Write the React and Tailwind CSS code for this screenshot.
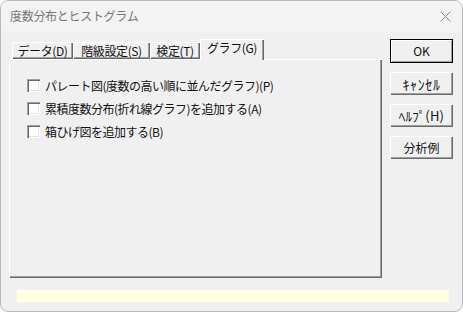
import React from 'react';

const raised =
  'shadow-[inset_1px_1px_0_#ffffff,inset_-1px_-1px_0_#696969,inset_-2px_-2px_0_#a0a0a0]';

const tabs = [
  { label: 'データ(D)', w: 'w-[61px]' },
  { label: '階級設定(S)', w: 'w-[77px]' },
  { label: '検定(T)', w: 'w-[50px]' },
];

const options = [
  'パレート図(度数の高い順に並んだグラフ)(P)',
  '累積度数分布(折れ線グラフ)を追加する(A)',
  '箱ひげ図を追加する(B)',
];

const buttons = [
  { label: 'ｷｬﾝｾﾙ', cls: 'text-[14px] tracking-[0.6px]' },
  { label: 'ﾍﾙﾌﾟ(H)', cls: 'text-[13px] tracking-[0.2px]' },
  { label: '分析例', cls: 'text-[12px] tracking-[0px]' },
];

const Checkbox = () => (
  <div className="w-[13px] h-[13px] bg-white shrink-0 shadow-[inset_1px_1px_0_#a0a0a0,inset_2px_2px_0_#696969,inset_-1px_-1px_0_#ffffff,inset_-2px_-2px_0_#e3e3e3]" />
);

const App = () => {
  return (
    <div className="w-[463px] h-[312px] bg-[#f0f0f0] border border-[#b9b9b9] rounded-lg overflow-hidden font-['Noto_Sans_CJK_JP',sans-serif] text-[12px] text-[#111]">
      {/* Title bar */}
      <div className="h-[30px] flex items-center justify-between pl-[9px] pr-[10px] bg-[#f3f3f3]">
        <span className="text-[#777] text-[12px] tracking-[-0.3px]">度数分布とヒストグラム</span>
        <svg width="11" height="11" viewBox="0 0 11 11" className="mr-[1px]">
          <path d="M0.5 0.5L10.5 10.5M10.5 0.5L0.5 10.5" stroke="#8a8a8a" strokeWidth="1" />
        </svg>
      </div>

      <div className="flex mt-[8px]">
        {/* Tabs + panel */}
        <div className="ml-[8px] w-[373px] flex flex-col">
          <div className="h-[20px] flex items-end pl-[3px] relative z-10">
            {tabs.map((t) => (
              <div
                key={t.label}
                className={`${t.w} h-[17px] flex items-center justify-center leading-none tracking-[-0.4px] ${raised}`}
              >
                {t.label}
              </div>
            ))}
            <div className="w-[64px] h-[21px] -mb-[1px] flex items-center justify-center pb-[3px] leading-none tracking-[-0.4px] bg-[#f0f0f0] shadow-[inset_1px_1px_0_#ffffff,inset_-1px_0_0_#696969,inset_-2px_0_0_#a0a0a0]">
              グラフ(G)
            </div>
          </div>
          <div className={`h-[219px] ${raised} pl-[18px] pt-[20px] flex flex-col gap-[10px]`}>
            {options.map((o) => (
              <div key={o} className="flex items-center gap-[5px] h-[13px]">
                <Checkbox />
                <span className="leading-none tracking-[-0.5px]">{o}</span>
              </div>
            ))}
          </div>
        </div>

        {/* Buttons */}
        <div className="ml-[8px] flex flex-col gap-[9px]">
          <div className="w-[63px] h-[24px] border border-black">
            <div className="w-full h-full flex items-center justify-center leading-none shadow-[inset_1px_1px_0_#ffffff,inset_-1px_-1px_0_#a0a0a0]">
              OK
            </div>
          </div>
          {buttons.map((b) => (
            <div
              key={b.label}
              className={`w-[63px] h-[23px] flex items-center justify-center leading-none ${b.cls} ${raised}`}
            >
              {b.label}
            </div>
          ))}
        </div>
      </div>

      {/* Status bar */}
      <div className="ml-[16px] mt-[12px] w-[432px] h-[12px] bg-[#ffffe1]" />
    </div>
  );
};

export default App;
